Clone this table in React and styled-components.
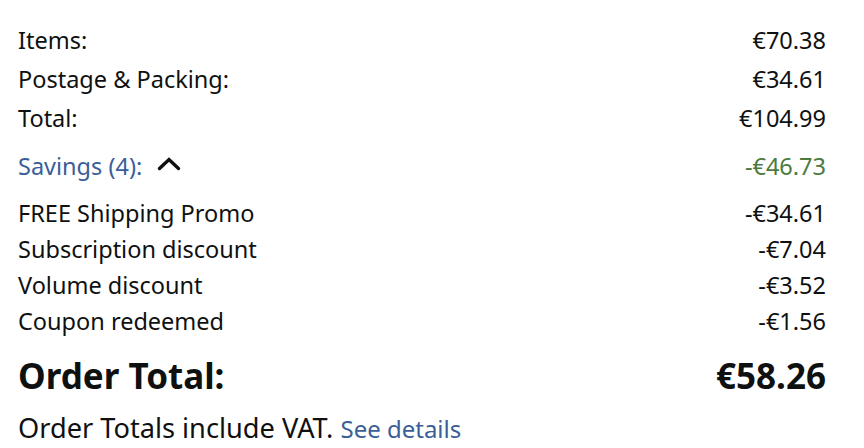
import React from 'react'
import styled, { createGlobalStyle } from 'styled-components'

const GlobalStyle = createGlobalStyle`
  body {
    margin: 0;
    background: #fff;
    font-family: "Noto Sans", "Open Sans", sans-serif;
    color: #0f1111;
  }
`

const summary = [
  { label: 'Items:', value: '€70.38' },
  { label: 'Postage & Packing:', value: '€34.61' },
  { label: 'Total:', value: '€104.99' },
]

const savings = [
  { label: 'FREE Shipping Promo', value: '-€34.61' },
  { label: 'Subscription discount', value: '-€7.04' },
  { label: 'Volume discount', value: '-€3.52' },
  { label: 'Coupon redeemed', value: '-€1.56' },
]

const Chevron = () => (
  <svg width="24" height="15" viewBox="0 0 24 15" fill="none">
    <path d="M2.5 12.5 L12 3.5 L21.5 12.5" stroke="#0f1111" strokeWidth="3.4" strokeLinecap="round" />
  </svg>
)

const App = () => (
  <>
    <GlobalStyle />
    <Wrapper>
      <Group gap={7}>
        {summary.map((row) => (
          <Row key={row.label}>
            <span>{row.label}</span>
            <span>{row.value}</span>
          </Row>
        ))}
      </Group>

      <SavingsRow>
        <SavingsLabel>
          Savings (4):
          <Chevron />
        </SavingsLabel>
        <SavingsValue>-€46.73</SavingsValue>
      </SavingsRow>

      <Group gap={4}>
        {savings.map((row) => (
          <Row key={row.label}>
            <span>{row.label}</span>
            <span>{row.value}</span>
          </Row>
        ))}
      </Group>

      <TotalRow>
        <span>Order Total:</span>
        <span>€58.26</span>
      </TotalRow>

      <Note>
        Order Totals include VAT. <a href="#details">See details</a>
      </Note>
    </Wrapper>
  </>
)

const Wrapper = styled.div`
  width: 864px;
  height: 448px;
  box-sizing: border-box;
  padding: 24px 38px 0 18px;
  overflow: hidden;
`

const Group = styled.div`
  display: flex;
  flex-direction: column;
  gap: ${({ gap }) => gap}px;
`

const Row = styled.div`
  display: flex;
  justify-content: space-between;
  align-items: center;
  font-size: 23.5px;
  line-height: 32px;
`

const SavingsRow = styled(Row)`
  margin: 16px 0 15px;
`

const SavingsLabel = styled.span`
  display: flex;
  align-items: center;
  gap: 15px;
  color: #3a5f98;
  svg {
    margin-top: -6px;
  }
`

const SavingsValue = styled.span`
  color: #4b7b3e;
`

const TotalRow = styled(Row)`
  margin-top: 17px;
  font-size: 35px;
  line-height: 44px;
  font-weight: 700;
`

const Note = styled.div`
  margin-top: 12px;
  font-size: 27.2px;
  line-height: 36px;
  white-space: nowrap;

  a {
    color: #3a5f98;
    font-size: 24px;
    text-decoration: none;
  }
`

export default App
